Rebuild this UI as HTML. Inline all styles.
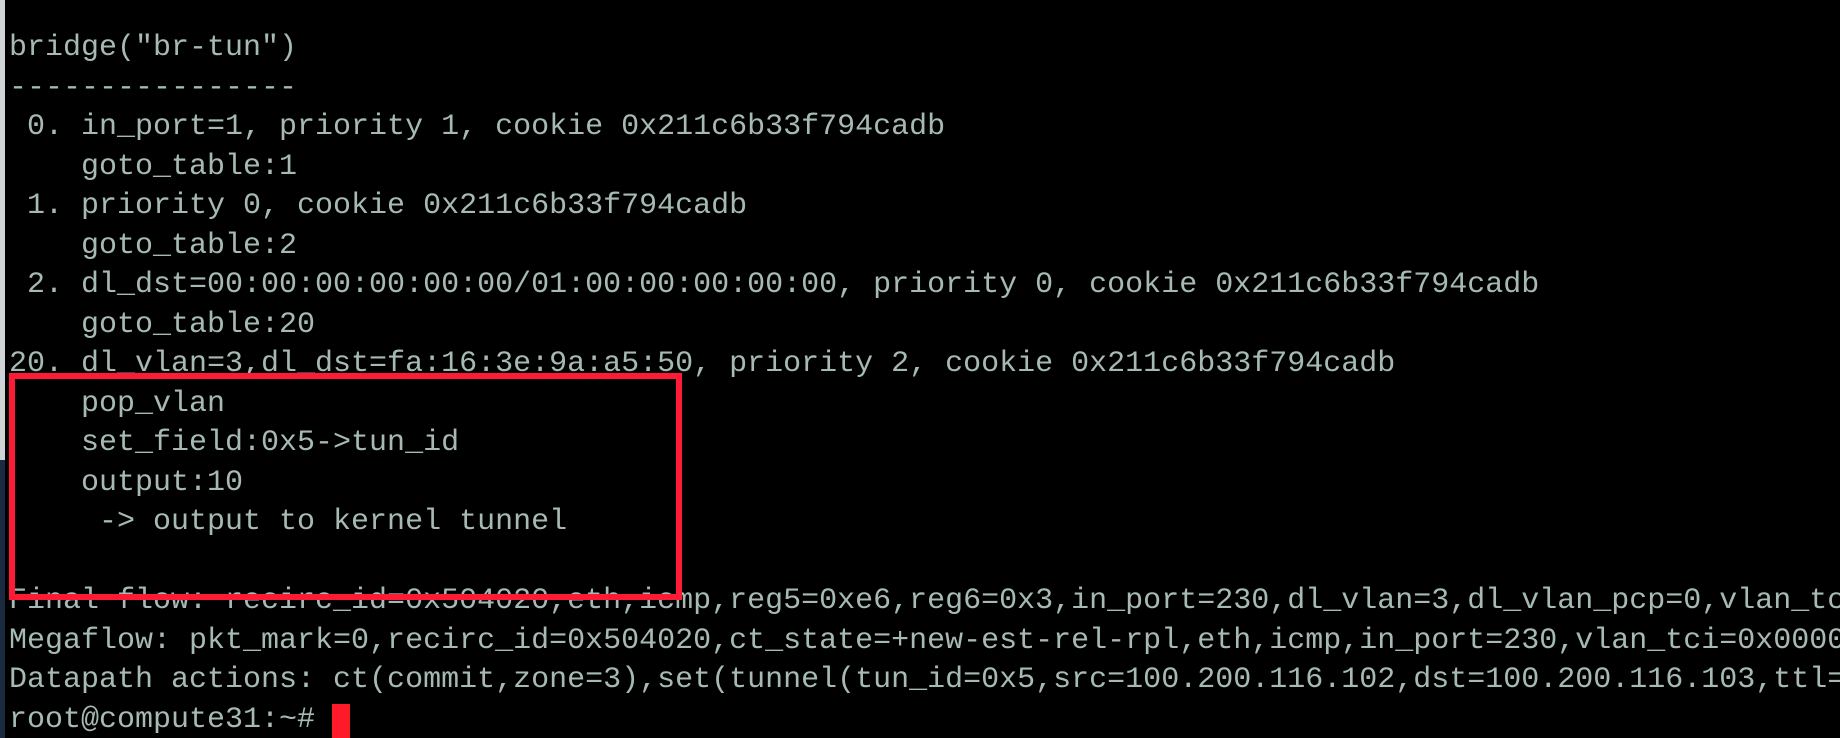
<!DOCTYPE html>
<html><head><meta charset="utf-8"><style>
html,body{margin:0;padding:0;background:#000;width:1840px;height:738px;overflow:hidden;position:relative}
.strip{position:absolute;left:0;top:0;width:5px;height:460px;background:#cfd3d6}
.strip2{position:absolute;left:0;top:460px;width:5px;height:278px;background:#1a2a40}
pre{position:absolute;left:9px;top:29px;width:1831px;height:709px;overflow:hidden;margin:0;font-family:"Liberation Mono",monospace;font-size:30px;line-height:39.5px;color:#a6bab3;white-space:pre}
.box{position:absolute;left:9px;top:373px;width:661px;height:215px;border:6px solid #ff1a35;box-sizing:content-box}
.cur{position:absolute;left:332px;top:704px;width:18px;height:34px;background:#ff1a2a}
</style></head><body>
<div class="strip"></div><div class="strip2"></div>
<pre>bridge("br-tun")
----------------
 0. in_port=1, priority 1, cookie 0x211c6b33f794cadb
    goto_table:1
 1. priority 0, cookie 0x211c6b33f794cadb
    goto_table:2
 2. dl_dst=00:00:00:00:00:00/01:00:00:00:00:00, priority 0, cookie 0x211c6b33f794cadb
    goto_table:20
20. dl_vlan=3,dl_dst=fa:16:3e:9a:a5:50, priority 2, cookie 0x211c6b33f794cadb
    pop_vlan
    set_field:0x5-&gt;tun_id
    output:10
     -&gt; output to kernel tunnel

Final flow: recirc_id=0x504020,eth,icmp,reg5=0xe6,reg6=0x3,in_port=230,dl_vlan=3,dl_vlan_pcp=0,vlan_tci=0x0000
Megaflow: pkt_mark=0,recirc_id=0x504020,ct_state=+new-est-rel-rpl,eth,icmp,in_port=230,vlan_tci=0x0000/0x1fff
Datapath actions: ct(commit,zone=3),set(tunnel(tun_id=0x5,src=100.200.116.102,dst=100.200.116.103,ttl=64))
root@compute31:~# </pre>
<div class="box"></div>
<div class="cur"></div>
</body></html>
